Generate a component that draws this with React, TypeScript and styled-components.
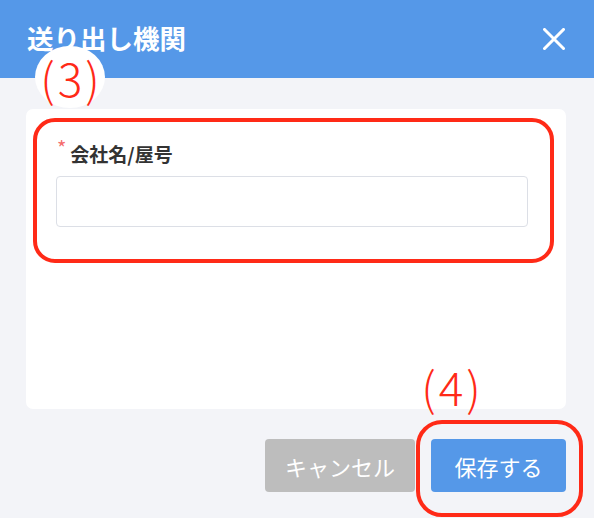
import React from "react";
import styled, { createGlobalStyle } from "styled-components";

const Global = createGlobalStyle`
  html, body { margin: 0; padding: 0; }
  body {
    background: #f3f4f8;
    font-family: "Noto Sans CJK JP", "Noto Sans", sans-serif;
    width: 594px;
    height: 518px;
    overflow: hidden;
  }
`;

const Page = styled.div`
  position: relative;
  width: 594px;
  height: 518px;
  background: #f3f4f8;
`;

const Header = styled.header`
  height: 78px;
  background: #5598e8;
  display: flex;
  align-items: center;
  justify-content: space-between;
  padding: 0 28px 0 27px;
  box-sizing: border-box;
`;

const Title = styled.h1`
  margin: 0;
  color: #fff;
  font-size: 26.5px;
  font-weight: 700;
  line-height: 1;
  padding-bottom: 2px;
`;

const CloseButton = styled.button`
  border: 0;
  background: none;
  padding: 0;
  width: 24px;
  height: 24px;
  display: flex;
  align-items: center;
  justify-content: center;
  cursor: pointer;
`;

const Body = styled.main`
  padding: 31px 28px 0 26px;
`;

const Card = styled.section`
  background: #fff;
  border-radius: 7px;
  height: 300px;
  box-sizing: border-box;
  padding: 31px 38px 0 30px;
`;

const FormItem = styled.div`
  display: flex;
  flex-direction: column;
  gap: 8px;
`;

const Label = styled.label`
  display: flex;
  align-items: flex-start;
  gap: 4px;
  color: #333;
  font-size: 19px;
  font-weight: 700;
  line-height: 28px;
  padding-left: 1px;
`;

const Star = styled.span`
  color: #f56c6c;
  font-size: 20px;
  line-height: 20px;
  font-weight: 400;
  margin-top: -2px;
`;

const Input = styled.input`
  height: 51px;
  border: 1px solid #dcdfe6;
  border-radius: 4px;
  box-sizing: border-box;
  outline: none;
  padding: 0 14px;
  font-size: 16px;
  font-family: inherit;
`;

const Footer = styled.footer`
  display: flex;
  justify-content: flex-end;
  gap: 16px;
  padding: 30px 28px 0 0;
`;

const Button = styled.button<{ $primary?: boolean }>`
  height: 53px;
  width: ${(p) => (p.$primary ? "135px" : "150px")};
  border: 0;
  border-radius: 4px;
  background: ${(p) => (p.$primary ? "#5598e8" : "#bdbdbd")};
  color: #fff;
  font-family: inherit;
  font-size: 22px;
  font-weight: 400;
  cursor: pointer;
  padding: 0;
`;

const Ring = styled.div<{ $l: number; $t: number; $w: number; $h: number; $r: number }>`
  position: absolute;
  left: ${(p) => p.$l}px;
  top: ${(p) => p.$t}px;
  width: ${(p) => p.$w}px;
  height: ${(p) => p.$h}px;
  border: 4px solid #ff2a17;
  border-radius: ${(p) => p.$r}px;
  box-sizing: border-box;
  pointer-events: none;
`;

const Marker = styled.div<{ $l: number; $t: number; $bg?: boolean }>`
  position: absolute;
  left: ${(p) => p.$l}px;
  top: ${(p) => p.$t}px;
  width: 70px;
  height: 62px;
  border-radius: 50%;
  background: ${(p) => (p.$bg ? "#fff" : "transparent")};
  display: flex;
  align-items: center;
  justify-content: center;
  color: #ff2a17;
  font-family: "Noto Sans CJK JP", sans-serif;
  font-weight: 300;
  font-size: 46px;
  line-height: 1;
  letter-spacing: 3px;
  text-indent: 3px;
`;

export default function App() {
  return (
    <Page>
      <Global />
      <Header>
        <Title>送り出し機関</Title>
        <CloseButton aria-label="close">
          <svg width="22" height="22" viewBox="0 0 22 22">
            <path d="M1.5 1.5 L20.5 20.5 M20.5 1.5 L1.5 20.5" stroke="#fff" strokeWidth="3" strokeLinecap="square" />
          </svg>
        </CloseButton>
      </Header>
      <Body>
        <Card>
          <FormItem>
            <Label>
              <Star>*</Star>
              会社名/屋号
            </Label>
            <Input />
          </FormItem>
        </Card>
      </Body>
      <Footer>
        <Button>キャンセル</Button>
        <Button $primary>保存する</Button>
      </Footer>
      <Ring $l={33} $t={118} $w={521} $h={145} $r={22} />
      <Ring $l={416} $t={420} $w={167} $h={97} $r={26} />
      <Marker $l={35} $t={46} $bg>(3)</Marker>
      <Marker $l={416} $t={355}>(4)</Marker>
    </Page>
  );
}
